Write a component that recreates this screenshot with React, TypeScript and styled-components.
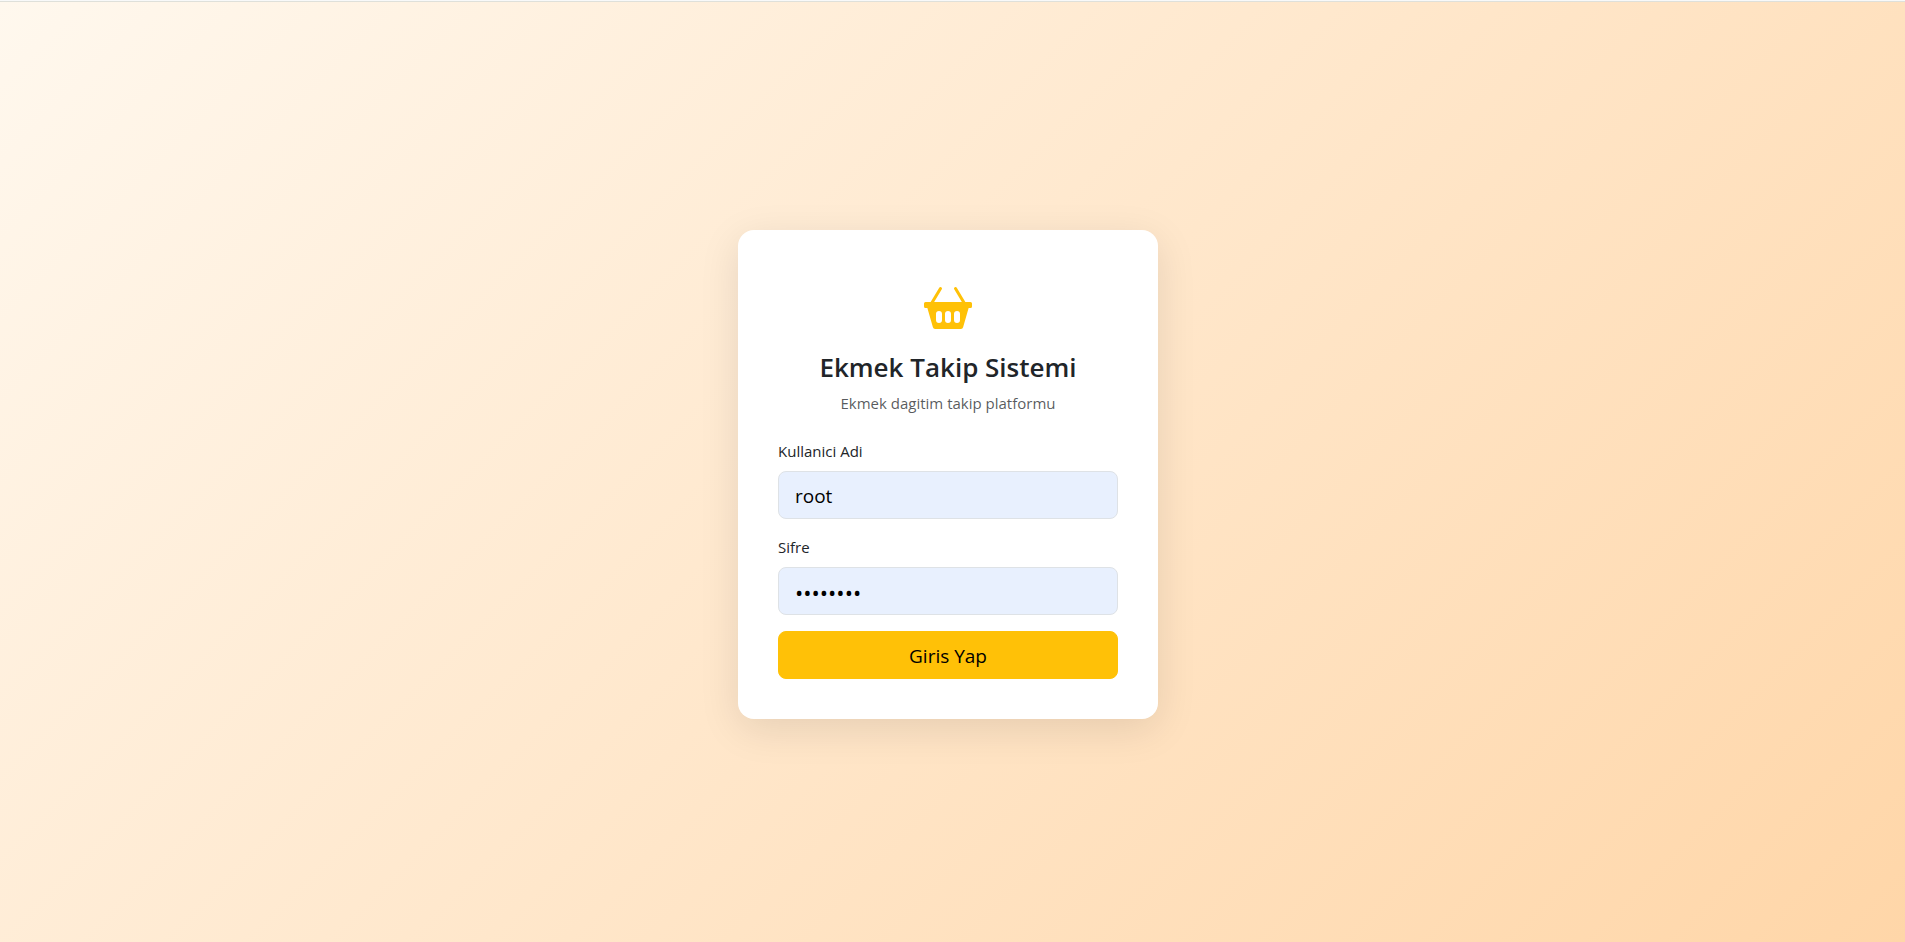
import React from "react";
import styled, { createGlobalStyle } from "styled-components";
import { BsBasket2Fill } from "react-icons/bs";

const GlobalStyle = createGlobalStyle`
  *, *::before, *::after { box-sizing: border-box; }
  body {
    margin: 0;
    font-family: "Segoe UI", "Open Sans", "Noto Sans", sans-serif;
    font-size: 15px;
    line-height: 24px;
    color: #212529;
  }
`;

const Page = styled.main`
  min-height: 100vh;
  display: flex;
  align-items: center;
  justify-content: center;
  padding: 6px 9px 0 0;
  border-top: 1px solid #f8f9f9;
  background: linear-gradient(135deg, #fff8ee 0%, #ffd6a8 100%);
  box-shadow: inset 0 1px 0 #dfe0da;
`;

const Card = styled.section`
  width: 100%;
  max-width: 420px;
  padding: 40px;
  border-radius: 16px;
  background: #fff;
  box-shadow: 0 10px 40px rgba(0, 0, 0, 0.1);
`;

const Header = styled.header`
  display: flex;
  flex-direction: column;
  align-items: center;
  padding-top: 14px;
  margin-bottom: 24px;
  text-align: center;
`;

const BasketIcon = styled(BsBasket2Fill)`
  width: 48px;
  height: 48px;
  margin-bottom: 17px;
  color: #ffc107;
`;

const Title = styled.h1`
  margin: 0 0 6px;
  font-size: 26px;
  line-height: 36px;
  font-weight: 600;
`;

const Subtitle = styled.p`
  margin: 0;
  color: rgba(33, 37, 41, 0.75);
`;

const Form = styled.form`
  display: flex;
  flex-direction: column;
  gap: 16px;
`;

const Field = styled.div`
  display: flex;
  flex-direction: column;
  gap: 8px;
`;

const Input = styled.input`
  width: 100%;
  height: 48px;
  padding: 9px 16px 7px;
  border: 1px solid #dee2e6;
  border-radius: 8px;
  background: #e8f0fe;
  color: #000;
  font: inherit;
  font-size: ${({ type }) => (type === "password" ? "22px" : "19px")};
  outline: none;
`;

const SubmitButton = styled.button`
  width: 100%;
  height: 48px;
  padding: 9px 16px 7px;
  border: 1px solid #ffc107;
  border-radius: 8px;
  background: #ffc107;
  color: #000;
  font: inherit;
  font-size: 19px;
  cursor: pointer;
`;

export default function App() {
  return (
    <>
      <GlobalStyle />
      <Page>
        <Card>
          <Header>
            <BasketIcon aria-hidden="true" />
            <Title>Ekmek Takip Sistemi</Title>
            <Subtitle>Ekmek dagitim takip platformu</Subtitle>
          </Header>
          <Form onSubmit={(event) => event.preventDefault()}>
            <Field>
              <label htmlFor="username">Kullanici Adi</label>
              <Input id="username" type="text" defaultValue="root" autoComplete="username" />
            </Field>
            <Field>
              <label htmlFor="password">Sifre</label>
              <Input id="password" type="password" defaultValue="rootroot" autoComplete="current-password" />
            </Field>
            <SubmitButton type="submit">Giris Yap</SubmitButton>
          </Form>
        </Card>
      </Page>
    </>
  );
}
